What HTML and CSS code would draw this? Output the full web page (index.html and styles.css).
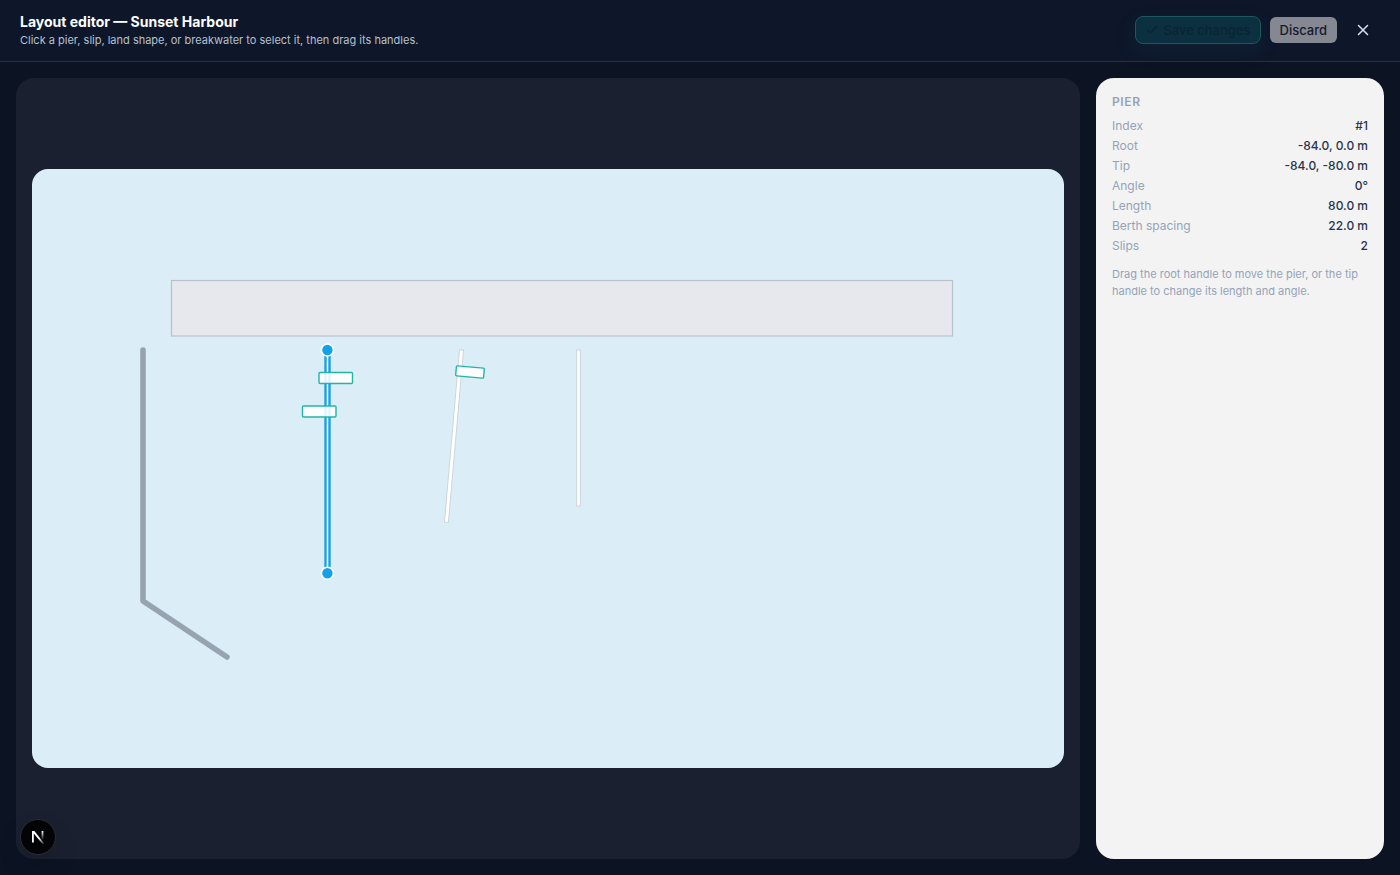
FILE: index.html
```html
<!DOCTYPE html>
<html lang="en">

<head>
    <meta charset="UTF-8">
    <meta name="viewport" content="width=device-width, initial-scale=1.0">
    <title>Layout editor</title>
    <link rel="stylesheet" href="styles.css">
</head>

<body>
    <header class="top-bar">
        <div class="heading">
            <h1 class="title">Layout editor — Sunset Harbour</h1>
            <p class="subtitle">Click a pier, slip, land shape, or breakwater to select it, then drag its handles.</p>
        </div>
        <div class="actions">
            <button type="button" class="btn btn-save" disabled>
                <svg class="icon-check" viewBox="0 0 24 24" aria-hidden="true">
                    <path d="M20 6 9 17l-5-5" />
                </svg>
                Save changes
            </button>
            <button type="button" class="btn btn-discard" disabled>Discard</button>
            <button type="button" class="btn-close" aria-label="Close">
                <svg class="icon-close" viewBox="0 0 24 24" aria-hidden="true">
                    <path d="M18 6 6 18M6 6l12 12" />
                </svg>
            </button>
        </div>
    </header>

    <main class="editor">
        <section class="canvas">
            <svg class="map" viewBox="0 0 1032 599">
                <!-- land -->
                <rect class="land" x="139.5" y="111.5" width="781" height="55.5" />

                <!-- breakwater -->
                <polyline class="breakwater" points="111,181 111,432 195,488" />

                <!-- piers, the first one is selected -->
                <rect class="pier selected" x="293.5" y="181" width="4" height="223" />
                <rect class="pier" x="427.5" y="181" width="4" height="173" transform="rotate(5 429.5 181)" />
                <rect class="pier" x="544.7" y="181" width="3.6" height="156" />

                <!-- slips -->
                <rect class="slip" x="287" y="203.5" width="33.5" height="11" rx="1" />
                <rect class="slip" x="270.5" y="237" width="33.5" height="11" rx="1" />
                <rect class="slip" x="424" y="198" width="28" height="10" rx="1" transform="rotate(5 438 203)" />

                <!-- root and tip handles -->
                <circle class="handle" cx="295.4" cy="181" r="6" />
                <circle class="handle" cx="295.4" cy="404.2" r="6" />
            </svg>
        </section>

        <aside class="panel">
            <h2 class="panel-title">Pier</h2>
            <dl class="props">
                <div class="prop"><dt>Index</dt><dd>#1</dd></div>
                <div class="prop"><dt>Root</dt><dd>-84.0, 0.0 m</dd></div>
                <div class="prop"><dt>Tip</dt><dd>-84.0, -80.0 m</dd></div>
                <div class="prop"><dt>Angle</dt><dd>0°</dd></div>
                <div class="prop"><dt>Length</dt><dd>80.0 m</dd></div>
                <div class="prop"><dt>Berth spacing</dt><dd>22.0 m</dd></div>
                <div class="prop"><dt>Slips</dt><dd>2</dd></div>
            </dl>
            <p class="hint">Drag the root handle to move the pier, or the tip handle to change its length and angle.</p>
        </aside>
    </main>

    <button type="button" class="dev-badge" aria-label="Dev tools">
        <svg class="dev-logo" viewBox="0 0 14 14" aria-hidden="true">
            <defs>
                <linearGradient id="fade-leg" x1="0" y1="0" x2="0" y2="1">
                    <stop offset="0" stop-color="#fff" />
                    <stop offset="1" stop-color="#fff" stop-opacity="0" />
                </linearGradient>
                <linearGradient id="fade-diag" gradientUnits="userSpaceOnUse" x1="8" y1="8" x2="13" y2="14">
                    <stop offset="0" stop-color="#fff" />
                    <stop offset="1" stop-color="#fff" stop-opacity="0.1" />
                </linearGradient>
            </defs>
            <path d="M1 1h2.4L13.2 13.6 11.8 14.4 2.8 3.4V12.5H1z" fill="url(#fade-diag)" />
            <rect x="10.6" y="1" width="1.8" height="9" fill="url(#fade-leg)" />
        </svg>
    </button>
</body>

</html>
```
FILE: styles.css
```css
* {
    box-sizing: border-box;
}

body {
    margin: 0;
    min-height: 100vh;
    display: flex;
    flex-direction: column;
    font-family: Inter, "Liberation Sans", sans-serif;
    background-color: #0c1323;
    color: #1e293b;
}

h1,
h2,
p,
dl,
dd {
    margin: 0;
}

.top-bar {
    display: flex;
    align-items: center;
    justify-content: space-between;
    padding: 12px 20px;
    background-color: #0e172a;
    border-bottom: 1px solid #263143;
}

.title {
    font-size: 14px;
    line-height: 20px;
    font-weight: 700;
    color: #fff;
}

.subtitle {
    font-size: 11px;
    line-height: 17px;
    color: #b6c0cf;
}

.actions {
    display: flex;
    align-items: center;
    gap: 9px;
    margin-bottom: 2px;
}

.btn {
    display: flex;
    align-items: center;
    font-family: inherit;
    font-size: 13px;
    line-height: 16px;
    font-weight: 500;
}

.btn-save {
    gap: 4px;
    padding: 5px 9px;
    border: 1px solid #1f565f;
    border-radius: 8px;
    background-color: #0b3040;
    color: #0b2433;
    box-shadow: 0 8px 20px rgba(20, 80, 100, 0.15);
}

.btn-discard {
    padding: 5px 10px;
    border: 0;
    border-radius: 6px;
    background-color: #858892;
    color: #151b2b;
}

.btn-close {
    display: flex;
    padding: 8px;
    border: 0;
    background: none;
    color: #dbe3ee;
}

.icon-check,
.icon-close {
    fill: none;
    stroke: currentColor;
    stroke-width: 2;
    stroke-linecap: round;
    stroke-linejoin: round;
}

.icon-check {
    width: 14px;
    height: 14px;
}

.icon-close {
    width: 18px;
    height: 18px;
}

.editor {
    flex: 1;
    display: flex;
    gap: 16px;
    padding: 16px;
}

.canvas {
    flex: 1;
    min-width: 0;
    display: flex;
    align-items: center;
    padding: 16px;
    border-radius: 18px;
    background-color: #1a202f;
}

.map {
    display: block;
    width: 100%;
    border-radius: 16px;
    background-color: #dbeef8;
}

.land {
    fill: #e7e8ed;
    stroke: #b8c1cb;
    stroke-width: 1.2;
}

.breakwater {
    fill: none;
    stroke: #98a3b1;
    stroke-width: 5.6;
    stroke-linecap: round;
    stroke-linejoin: round;
}

.pier {
    fill: #fff;
    stroke: #ced4da;
    stroke-width: 1;
}

.pier.selected {
    stroke: #1ba0e2;
    stroke-width: 2.4;
}

.slip {
    fill: rgba(255, 255, 255, 0.87);
    stroke: #22b5a2;
    stroke-width: 1.4;
}

.handle {
    fill: #14a1e6;
    stroke: #fff;
    stroke-width: 1.6;
}

.panel {
    width: 288px;
    padding: 16px;
    border-radius: 18px;
    background-color: #f3f3f3;
}

.panel-title {
    margin-bottom: 6px;
    font-size: 12px;
    line-height: 16px;
    font-weight: 600;
    letter-spacing: 0.6px;
    text-transform: uppercase;
    color: #94a3b8;
}

.prop {
    display: flex;
    justify-content: space-between;
    font-size: 12px;
    line-height: 16px;
    padding: 2px 0;
}

.prop dt {
    color: #94a3b8;
}

.prop dd {
    font-weight: 500;
    color: #27344a;
}

.hint {
    margin-top: 10px;
    font-size: 11px;
    line-height: 17px;
    color: #94a3b8;
}

/* floats over the canvas corner */
.dev-badge {
    position: fixed;
    left: 20px;
    bottom: 20px;
    width: 36px;
    height: 36px;
    display: flex;
    align-items: center;
    justify-content: center;
    padding: 0;
    border: 1px solid #2b2d33;
    border-radius: 50%;
    background-color: #030405;
    box-shadow: 0 12px 24px rgba(0, 0, 0, 0.14);
}

.dev-logo {
    width: 14px;
    height: 14px;
}
```
